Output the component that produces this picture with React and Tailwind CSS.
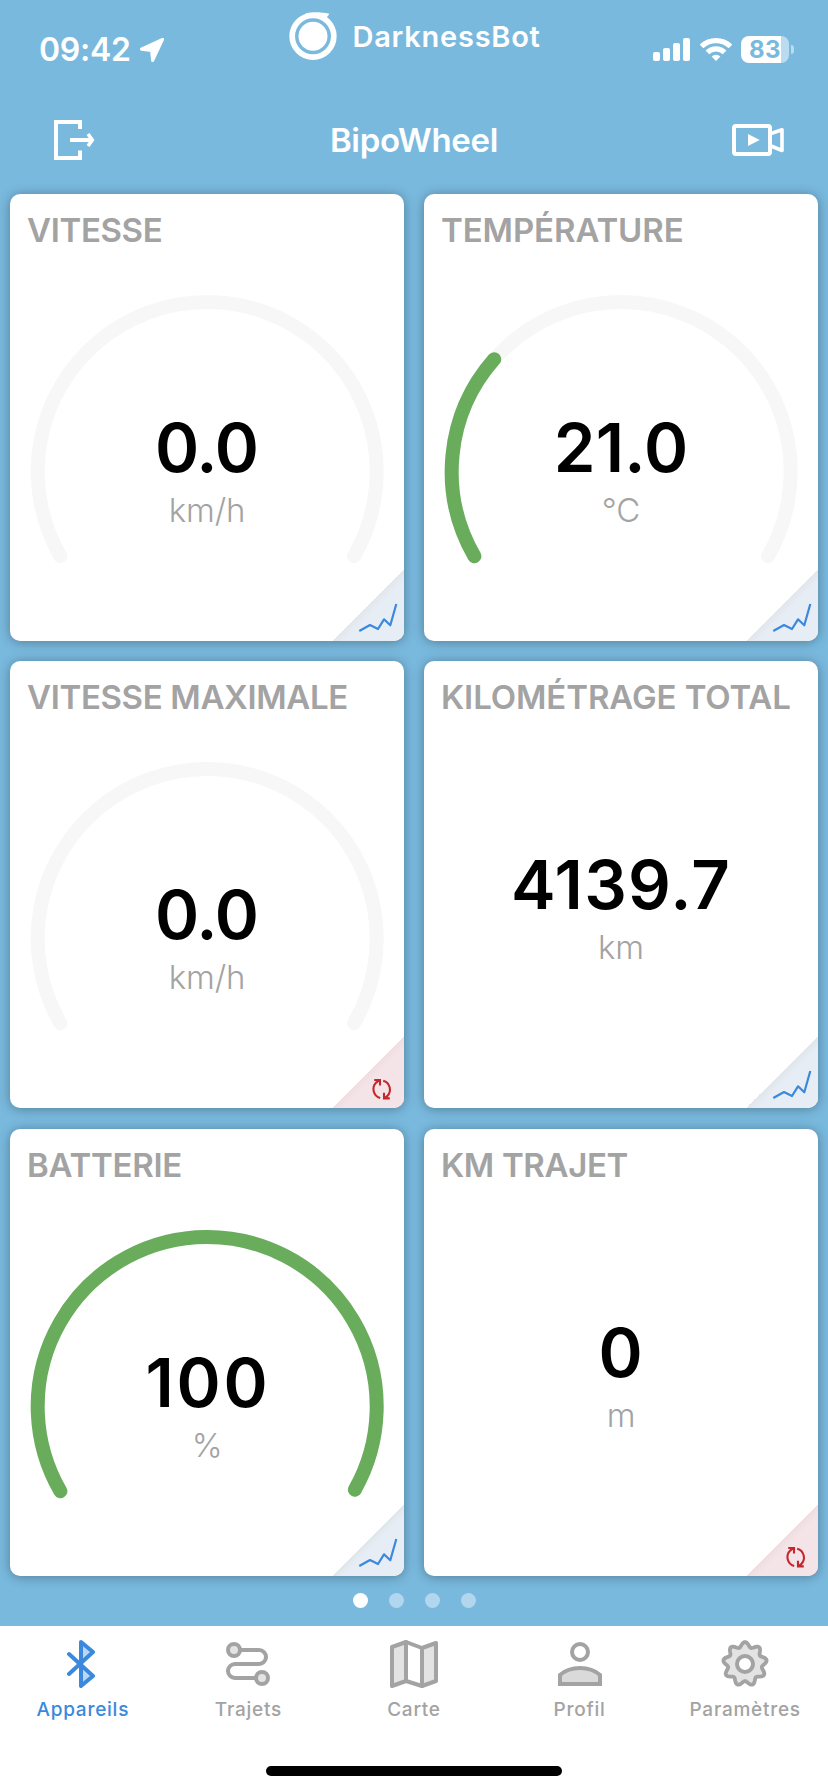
const TRACK = "#f7f7f7";
const GREEN = "#68ac5c";

const cards = [
  { title: "VITESSE", titleClass: "tracking-[-0.35px]", value: "0.0", unit: "km/h", valueClass: "tracking-[-1px] pr-px", sweep: 0, action: "chart" },
  { title: "TEMPÉRATURE", titleClass: "tracking-[-0.1px]", value: "21.0", unit: "°C", valueClass: "tracking-[0.2px]", sweep: 71.5, action: "chart" },
  { title: "VITESSE MAXIMALE", titleClass: "tracking-[-0.35px]", value: "0.0", unit: "km/h", valueClass: "tracking-[-1px] pr-px", sweep: 0, action: "reset" },
  { title: "KILOMÉTRAGE TOTAL", titleClass: "tracking-[-0.1px]", value: "4139.7", unit: "km", valueClass: "tracking-[1.2px]", action: "chart" },
  { title: "BATTERIE", titleClass: "tracking-[-0.25px]", value: "100", unit: "%", valueClass: "tracking-[2.8px] pl-0.5", sweep: 239.4, action: "chart" },
  { title: "KM TRAJET", titleClass: "tracking-[-0.35px]", value: "0", unit: "m", valueClass: "tracking-normal pr-px", action: "reset" },
];

function arc(sweep) {
  const cx = 197.2, cy = 221.5, r = 169.5;
  const at = (deg) => {
    const a = (deg * Math.PI) / 180;
    return `${(cx + r * Math.cos(a)).toFixed(2)} ${(cy + r * Math.sin(a)).toFixed(2)}`;
  };
  return `M${at(150)} A${r} ${r} 0 ${sweep > 180 ? 1 : 0} 1 ${at(150 + sweep)}`;
}

function Gauge({ sweep }) {
  return (
    <svg className="col-start-1 row-start-1" width="394" height="391" fill="none" strokeWidth="14" strokeLinecap="round">
      {sweep < 200 && <path d={arc(240)} stroke={TRACK} />}
      {sweep > 0 && <path d={arc(sweep)} stroke={GREEN} />}
    </svg>
  );
}

function Corner({ action }) {
  if (action === "chart") {
    return (
      <div className="absolute right-0 bottom-0 size-[72px] rounded-br-[10px] bg-[linear-gradient(135deg,transparent_50%,#e0e6eb_50%,#e6edf4_58%)]">
        <svg width="72" height="72" viewBox="-1 -1 72 72" fill="none" stroke="#3b88dc" strokeWidth="2.2" strokeLinejoin="round">
          <path d="M26.3 61 L37 55 L45 59 L51 49.3 L57.3 55.3 L63.3 34" />
        </svg>
      </div>
    );
  }
  return (
    <div className="absolute right-0 bottom-0 size-[72px] rounded-br-[10px] bg-[linear-gradient(135deg,transparent_50%,#eedde1_50%,#f4e3e7_58%)]">
      <svg width="72" height="72" viewBox="-1 -1 72 72" fill="none" stroke="#c4282d" strokeWidth="2.1">
        <path d="M47.2 61 A9.2 9.2 0 0 1 43.2 45.6 L46 43.4 M41.2 43 H47 V48.6" />
        <path d="M50.2 43.8 A9.2 9.2 0 0 1 54.2 59.2 L51.6 61.2 M56.8 61.4 H51 V55.8" />
      </svg>
    </div>
  );
}

function Card({ title, titleClass, value, unit, valueClass, sweep, action }) {
  const gauge = sweep !== undefined;
  return (
    <section className="relative flex h-[447px] flex-col rounded-[10px] bg-white shadow-[0_1px_12px_rgba(0,0,0,0.33)]">
      <h2 className={`pt-4 pl-[17px] text-[33px] leading-10 font-semibold whitespace-nowrap text-[#a3a3a3] ${titleClass}`}>{title}</h2>
      <div className="grid flex-1">
        {gauge && <Gauge sweep={sweep} />}
        <div className={`col-start-1 row-start-1 flex flex-col items-center gap-0.5 ${gauge ? "pt-[158px]" : "pt-32"}`}>
          <span className={`text-[67px] leading-[80px] font-semibold text-black ${valueClass}`}>{value}</span>
          <span className="text-[33px] leading-10 font-light tracking-[-0.2px] text-[#a3a3a3]">{unit}</span>
        </div>
      </div>
      <Corner action={action} />
    </section>
  );
}

function StatusBar() {
  return (
    <div className="grid h-[98px] grid-cols-[1fr_251px_1fr] items-start text-white">
      <div className="flex items-center gap-2 pt-[30px] pl-[39px]">
        <span className="text-[32px] leading-10 font-[560] tracking-[-0.3px]">09:42</span>
        <svg width="26" height="26" viewBox="0 0 26 26" fill="currentColor" stroke="currentColor" strokeWidth="3" strokeLinejoin="round">
          <path d="M23.6 2.4 L2.4 12.2 L12.6 13.6 L13.6 23.6 Z" />
        </svg>
      </div>
      <div className="flex items-center gap-4 pt-3">
        <svg className="shrink-0" width="48" height="48" viewBox="0 0 48 48">
          <circle cx="24" cy="24.3" r="14.5" fill="currentColor" />
          <circle cx="24" cy="24.3" r="20.8" fill="none" stroke="currentColor" strokeWidth="5.7" />
          <path d="M16 1.6 C24 -0.4 32 0.2 40.3 1.8 L39 4 L37 5.5 L28 6 Z" fill="currentColor" />
        </svg>
        <span className="pt-px text-[29px] leading-9 font-semibold tracking-[0.75px]">DarknessBot</span>
      </div>
      <div className="flex items-center justify-end pt-9 pr-[34px]">
        <svg width="37" height="27" fill="currentColor">
          <rect x="0" y="16" width="7" height="9" rx="2" />
          <rect x="10" y="12" width="7" height="13" rx="2" />
          <rect x="20" y="7" width="7" height="18" rx="2" />
          <rect x="30" y="2" width="7" height="23" rx="2" />
        </svg>
        <svg className="ml-[10px]" width="32" height="27" fill="none" stroke="currentColor" strokeWidth="5.2">
          <path d="M1.5 10.5 A20.6 20.6 0 0 1 30.5 10.5" />
          <path d="M7.4 16.4 A12.2 12.2 0 0 1 24.6 16.4" />
          <path d="M11.6 20.6 A6.3 6.3 0 0 1 20.4 20.6 L16 25 Z" fill="currentColor" stroke="none" />
        </svg>
        <div className="ml-[9px] flex h-[27px] w-12 items-center justify-center rounded-lg bg-[linear-gradient(90deg,#fff_83.3%,#bbdcee_83.3%)] text-[24px] leading-none font-bold tracking-[0.5px] text-[#7ab9de]">
          83
        </div>
        <div className="ml-0.5 h-[9px] w-[3px] rounded-r-full bg-[#bbdcee]" />
      </div>
    </div>
  );
}

function NavBar() {
  return (
    <header className="grid h-24 grid-cols-[1fr_auto_1fr] items-start pt-[22px] pr-[42px] pl-[42px] text-white">
      <svg className="ml-3" width="54" height="40" fill="none" stroke="currentColor" strokeWidth="4">
        <path d="M26 9 V2 H2 V38 H26 V30.5" />
        <path d="M16 20 H38" />
        <path d="M34 14 L38.3 20 L34 26" strokeWidth="3.6" />
      </svg>
      <h1 className="text-[33px] leading-10 font-semibold tracking-[-0.3px]">BipoWheel</h1>
      <svg className="justify-self-end" width="54" height="40" fill="none" stroke="currentColor" strokeWidth="4" strokeLinejoin="round">
        <rect x="2" y="6" width="36" height="28" rx="2" />
        <path d="M39 13.5 L50 9.8 V30.5 L39 26" strokeWidth="3.6" />
        <path d="M16 14 L27.7 20 L16 26 Z" fill="currentColor" stroke="none" />
      </svg>
    </header>
  );
}

const gearPath = (() => {
  let d = "";
  for (let i = 0; i < 180; i++) {
    const a = (i * 2 * Math.PI) / 180;
    const r = 19.5 + 2.4 * Math.cos(9 * a);
    d += `${i ? "L" : "M"}${(24 + r * Math.sin(a)).toFixed(2)} ${(24 - r * Math.cos(a)).toFixed(2)}`;
  }
  return d + "Z";
})();

const tabs = [
  {
    label: "Appareils",
    active: true,
    icon: (
      <>
        <path d="M22 2 L34 12 L22 23 Z M22 25 L34 36 L22 46 Z" fill="#b8d9f3" stroke="none" />
        <path d="M10 14 L34 36 L22 46 V2 L34 12 L10 34" />
      </>
    ),
  },
  {
    label: "Trajets",
    icon: (
      <>
        <path d="M17 10 H35 A7 7 0 0 1 35 24 H11 A7 7 0 0 0 11 38 H31" />
        <circle cx="10" cy="10" r="6" fill="#e3e3e3" />
        <circle cx="38" cy="38" r="6" fill="#e3e3e3" />
      </>
    ),
  },
  {
    label: "Carte",
    icon: (
      <>
        <path d="M2 7 L16 2 V41 L2 46 Z M32 8 L46 3 V41 L32 46 Z" fill="#e3e3e3" />
        <path d="M16 2 L32 8 M16 41 L32 46" />
      </>
    ),
  },
  {
    label: "Profil",
    icon: (
      <>
        <circle cx="24" cy="12" r="8" />
        <path d="M4 44 V35 C9 30.5 16 28 24 28 S39 30.5 44 35 V44 Z" fill="#dadada" strokeLinejoin="miter" />
      </>
    ),
  },
  {
    label: "Paramètres",
    icon: (
      <>
        <path d={gearPath} fill="#e3e3e3" strokeWidth="3.8" />
        <circle cx="24" cy="24" r="8" fill="#fff" />
      </>
    ),
  },
];

function TabBar() {
  return (
    <nav className="mt-[18px] flex h-[166px] flex-col items-center bg-white">
      <div className="grid w-full grid-cols-5 pt-3.5">
        {tabs.map(({ label, active, icon }) => (
          <div key={label} className={`flex flex-col items-center gap-2.5 ${active ? "text-[#3b88dc]" : "text-[#a3a3a3]"}`}>
            <svg width="48" height="48" viewBox="0 0 48 48" fill="none" stroke="currentColor" strokeWidth="4" strokeLinecap="round" strokeLinejoin="round">
              {icon}
            </svg>
            <span className="text-[19px] leading-6 font-medium tracking-[0.75px]">{label}</span>
          </div>
        ))}
      </div>
      <div className="mt-11 h-2.5 w-[296px] rounded-full bg-black" />
    </nav>
  );
}

export default function App() {
  return (
    <div className="flex h-[1792px] w-[828px] flex-col overflow-hidden bg-[#79b9de] font-['Inter',sans-serif]">
      <StatusBar />
      <NavBar />
      <main className="grid grid-cols-2 grid-rows-[447px_448px_447px] gap-5 px-2.5">
        {cards.map((card) => (
          <Card key={card.title} {...card} />
        ))}
      </main>
      <div className="mt-[17px] flex justify-center gap-[21px]">
        <span className="size-[15px] rounded-full bg-white" />
        <span className="size-[15px] rounded-full bg-[#b2d6ee]" />
        <span className="size-[15px] rounded-full bg-[#b2d6ee]" />
        <span className="size-[15px] rounded-full bg-[#b2d6ee]" />
      </div>
      <TabBar />
    </div>
  );
}
